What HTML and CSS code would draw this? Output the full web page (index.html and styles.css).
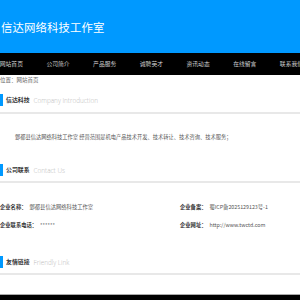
FILE: index.html
```html
<!DOCTYPE html>
<html lang="zh-CN">
<head>
    <meta charset="UTF-8">
    <meta name="viewport" content="width=device-width, initial-scale=1.0">
    <title>信达网络科技工作室</title>
    <link rel="stylesheet" href="styles.css">
</head>
<body>

    <!-- 头部 -->
    <div class="header">
        <div class="logo">信达网络科技工作室</div>
    </div>

    <!-- 导航 -->
    <div class="nav">
        <a href="#">网站首页</a>
        <a href="#">公司简介</a>
        <a href="#">产品服务</a>
        <a href="#">诚聘英才</a>
        <a href="#">资讯动态</a>
        <a href="#">在线留言</a>
        <a href="#">联系我们</a>
    </div>

    <div class="crumb">位置：网站首页</div>

    <!-- 公司简介 -->
    <div class="section">
        <div class="sec-head"><span class="cn">信达科技</span><span class="en">Company Introduction</span></div>
        <p class="intro">鄄都县信达网络科技工作室 经营范围是机电产品技术开发、技术转让、技术咨询、技术服务；</p>
    </div>

    <!-- 公司联系 -->
    <div class="section contact">
        <div class="sec-head"><span class="cn">公司联系</span><span class="en">Contact Us</span></div>
        <div class="info">
            <div class="row"><b>企业名称：</b><span>鄄都县信达网络科技工作室</span></div>
            <div class="row right"><b>企业备案：</b><span>蜀ICP备2025129123号-1</span></div>
            <div class="row"><b>企业联系电话：</b><span>******</span></div>
            <div class="row right"><b>企业网址：</b><span>http://www.twctd.com</span></div>
        </div>
    </div>

    <!-- 友情链接 -->
    <div class="section links">
        <div class="sec-head"><span class="cn">友情链接</span><span class="en">Friendly Link</span></div>
    </div>

    <div class="footer"></div>

</body>
</html>
```

FILE: styles.css
```css
body {
    margin: 0;
    font-family: "Noto Sans CJK SC", "Noto Sans", sans-serif;
    background-color: #fff;
    overflow: hidden;
}
.header {
    height: 53px;
    background-color: #0099ff;
}
.logo {
    padding-left: 1px;
    line-height: 54px;
    font-size: 11.4px;
    color: #fff;
    letter-spacing: 0.1px;
}
.nav {
    display: flex;
    height: 22px;
    margin-left: -12px;
    background-color: #000;
}
.nav a {
    flex: 0 0 46.7px;
    text-align: center;
    line-height: 22px;
    font-size: 5.8px;
    color: #ccc;
    text-decoration: none;
}
.crumb {
    height: 10px;
    line-height: 10px;
    font-size: 5.5px;
    color: #666;
}
.sec-head {
    margin-top: 9px;
    padding-bottom: 6px;
    border-bottom: 2px solid #e8e8e8;
    display: flex;
    align-items: center;
}
.cn {
    border-left: 3px solid #0099ff;
    padding-left: 3px;
    line-height: 12px;
    font-size: 5.9px;
    font-weight: bold;
    color: #333;
}
.en {
    margin-left: 4px;
    font-family: "Open Sans", sans-serif;
    font-size: 6.4px;
    font-weight: 300;
    color: #bbb;
}
.intro {
    margin: 18px 0 0;
    padding-left: 15px;
    line-height: 10px;
    font-size: 5.25px;
    color: #555;
}
.contact .sec-head {
    margin-top: 22px;
    padding-bottom: 5px;
}
.info {
    display: grid;
    grid-template-columns: 180px 1fr;
    row-gap: 8px;
    margin-top: 19px;
}
.row {
    line-height: 10px;
    font-size: 5.3px;
    color: #555;
}
.row b {
    color: #333;
}
.row span {
    margin-left: 3px;
}
.links .sec-head {
    margin-top: 26px;
    padding-bottom: 5px;
}
.footer {
    margin-top: 19px;
    height: 10px;
    border-top: 1px solid #aaa;
    background-color: #000;
}
```
